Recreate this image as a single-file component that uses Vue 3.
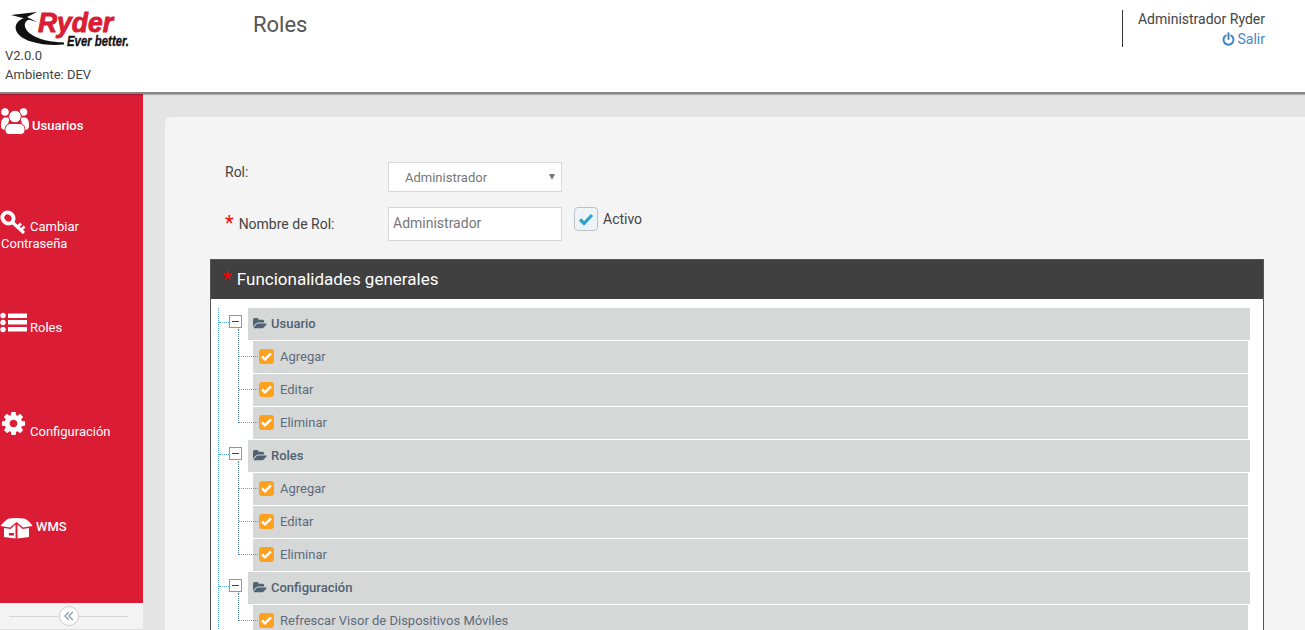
<script setup>
const groups = [
  { name: 'Usuario', items: ['Agregar', 'Editar', 'Eliminar'] },
  { name: 'Roles', items: ['Agregar', 'Editar', 'Eliminar'] },
  { name: 'Configuración', items: ['Refrescar Visor de Dispositivos Móviles'] },
]
</script>

<template>
  <div class="page">
    <header class="top">
      <div class="brand">
        <svg class="logo" width="135" height="52" viewBox="0 0 135 52">
          <path d="M11 15 L37 12 L27 17 L37 22 L25 18.500 L21 17.500 Z" fill="#111" />
          <path d="M24 18 C11 23 13 36 31 41.500 C42 45 54 45.500 64 44.500 L64 42.500 C48 42 31 38 26 29 C23.500 24.500 25 21 30 19 Z" fill="#111" />
          <text class="logo-ryder" x="38" y="32" textLength="75" lengthAdjust="spacingAndGlyphs">Ryder</text>
          <text class="logo-tag" x="67" y="46" textLength="62" lengthAdjust="spacingAndGlyphs">Ever better.</text>
        </svg>
        <div class="version">V2.0.0</div>
        <div class="env">Ambiente: DEV</div>
      </div>
      <h1 class="title">Roles</h1>
      <div class="user">
        <div class="user-name">Administrador Ryder</div>
        <div class="logout">
          <svg width="13" height="14" viewBox="0 0 13 14" fill="none" stroke="#3d85c6" stroke-width="2" stroke-linecap="round">
            <path d="M3.800 3.500 A5 5 0 1 0 9.200 3.500" />
            <path d="M6.500 1.200 V7" />
          </svg>
          <span>Salir</span>
        </div>
      </div>
    </header>

    <div class="body">
      <aside class="side">
        <nav class="menu">
          <a class="item item-users">
            <svg class="ico" width="30" height="28" viewBox="0 0 30 28" fill="#fff">
              <circle cx="5" cy="5" r="3.800" /><circle cx="23.500" cy="5" r="3.800" />
              <path d="M1 19 C1 12 3 10.500 6 10.500 L10 10.500 L6 23 Q1 23 1 19 Z" />
              <path d="M29 19 C29 12 27 10.500 24 10.500 L20 10.500 L24 23 Q29 23 29 19 Z" />
              <circle cx="15" cy="9.500" r="6.300" stroke="#da1c35" stroke-width="1" />
              <path d="M5 23.500 C5 18 8 16.500 11 16.500 L19 16.500 C22 16.500 25 18 25 23.500 Q25 27.500 21 27.500 L9 27.500 Q5 27.500 5 23.500 Z" stroke="#da1c35" stroke-width="1" />
            </svg><span class="label">Usuarios</span>
          </a>
          <a class="item item-key">
            <svg class="ico key" width="26" height="24" viewBox="0 0 26 24" fill="none" stroke="#fff">
              <ellipse cx="8" cy="8" rx="5.800" ry="5.200" transform="rotate(40 8 8)" stroke-width="4" />
              <path d="M12 12 L24 23" stroke-width="3.200" />
              <path d="M17.500 17 L21 13.500 M21 20 L24.500 16.500" stroke-width="2.600" />
            </svg><span class="label">Cambiar Contraseña</span>
          </a>
          <a class="item item-roles">
            <svg class="ico" width="27" height="21" viewBox="0 0 27 21" fill="#fff">
              <circle cx="3" cy="3.500" r="2.700" /><circle cx="3" cy="10.500" r="2.700" /><circle cx="3" cy="17.500" r="2.700" />
              <rect x="8" y="1.500" width="19" height="4.500" /><rect x="8" y="8" width="19" height="4.500" /><rect x="8" y="15" width="19" height="4.500" />
            </svg><span class="label">Roles</span>
          </a>
          <a class="item item-config">
            <svg class="ico" width="27" height="27" viewBox="0 0 1792 1792" fill="#fff">
              <path d="M1152 896q0-106-75-181t-181-75-181 75-75 181 75 181 181 75 181-75 75-181zm512-109v222q0 12-8 23t-20 13l-185 28q-19 54-39 91 35 50 107 138 10 12 10 25t-9 23q-27 37-99 108t-94 71q-12 0-26-9l-138-108q-44 23-91 38-16 136-29 186-7 28-36 28h-222q-14 0-24.500-8.500t-11.500-21.500l-28-184q-49-16-90-37l-141 107q-10 9-25 9-14 0-25-11-126-114-165-168-7-10-7-23 0-12 8-23 15-21 51-66.500t54-70.500q-27-50-41-99l-183-27q-13-2-21-12.500t-8-23.500v-222q0-12 8-23t19-13l186-28q14-46 39-92-40-57-107-138-10-12-10-24 0-10 9-23 26-36 98.500-107.500t94.500-71.500q13 0 26 10l138 107q44-23 91-38 16-136 29-186 7-28 36-28h222q14 0 24.500 8.500t11.500 21.500l28 184q49 16 90 37l142-107q9-9 24-9 13 0 25 10 129 119 165 170 7 8 7 22 0 12-8 23-15 21-51 66.500t-54 70.500q26 50 41 98l183 28q13 2 21 12.500t8 23.500z" />
            </svg><span class="label">Configuración</span>
          </a>
          <a class="item item-wms">
            <svg class="ico" width="33" height="22" viewBox="0 0 33 22" fill="#fff">
              <path d="M0.500 9 Q5 3 9 1.500 Q16 0.500 24 1.500 Q29 3 32.500 9 L23 10.500 L16.500 5 L10 10.500 Z" />
              <path d="M4 11 L10.500 12 L15.500 7.500 L15.500 21.500 L4 20 Z" />
              <path d="M17.500 7.500 L22.500 12 L29 11 L29 20 L17.500 21.500 Z" />
              <rect x="9" y="16" width="5" height="2.500" fill="#da1c35" />
            </svg><span class="label">WMS</span>
          </a>
        </nav>
        <div class="collapse">
          <span class="rule"></span>
          <span class="toggle">
            <svg width="10" height="10" viewBox="0 0 10 10" fill="none" stroke="#8a9bb0" stroke-width="1.300">
              <path d="M4.800 1 L1 5 L4.800 9 M8.800 1 L5 5 L8.800 9" />
            </svg>
          </span>
          <span class="rule"></span>
        </div>
      </aside>

      <main class="main">
        <section class="panel">
          <div class="row row-rol">
            <label class="lbl">Rol:</label>
            <div class="select">
              <span>Administrador</span>
              <i class="caret"></i>
            </div>
          </div>
          <div class="row row-name">
            <label class="lbl lbl-name"><b class="req">*</b><span class="name-text">Nombre de Rol:</span></label>
            <div class="input">Administrador</div>
            <span class="active-box">
              <svg width="16" height="13" viewBox="0 0 16 13" fill="none" stroke="#2ea2cc" stroke-width="3.200">
                <path d="M2 6.500 L6 10.500 L14 2" />
              </svg>
            </span>
            <span class="active-label">Activo</span>
          </div>

          <div class="box">
            <div class="box-head"><b class="req">*</b> Funcionalidades generales</div>
            <div class="tree">
              <div v-for="g in groups" :key="g.name" class="group">
                <span class="expander"></span>
                <div class="parent">
                  <svg width="14" height="13" viewBox="0 0 1920 1792" fill="#4f6172">
                    <path d="M1879 952q0 31-31 66l-336 396q-43 51-120.500 86.500t-143.500 35.500h-1088q-34 0-60.500-13t-26.500-43q0-31 31-66l336-396q43-51 120.500-86.500t143.500-35.500h1088q34 0 60.500 13t26.500 43zm-343-344v160h-832q-94 0-197 47.500t-164 119.500l-337 396-5 6q0-4-.5-12.500t-.5-12.500v-960q0-92 66-158t158-66h320q92 0 158 66t66 158v32h544q92 0 158 66t66 158z" />
                  </svg>
                  <span>{{ g.name }}</span>
                </div>
                <div class="children">
                  <div v-for="it in g.items" :key="it" class="child">
                    <span class="check">
                      <svg width="11" height="9" viewBox="0 0 11 9" fill="none" stroke="#fff" stroke-width="2.400">
                        <path d="M1 4.500 L4 7.300 L10 1.300" />
                      </svg>
                    </span>
                    <span>{{ it }}</span>
                  </div>
                </div>
              </div>
            </div>
          </div>
        </section>
      </main>
    </div>
  </div>
</template>

<style>
html, body { margin: 0; overflow: hidden; }
</style>

<style scoped>
.page {
  width: 1305px;
  height: 630px;
  overflow: hidden;
  display: flex;
  flex-direction: column;
  font-family: Roboto, "Liberation Sans", sans-serif;
  font-size: 14px;
  color: #555;
  background: #e4e4e4;
}
.top {
  height: 92px;
  flex: none;
  box-sizing: content-box;
  display: flex;
  background: #fff;
  border-bottom: 2px solid #868686;
  box-shadow: 0 1px 1px rgba(0, 0, 0, .22);
  position: relative;
  z-index: 1;
}
.brand { width: 253px; flex: none; font-size: 13px; color: #444; }
.logo { display: block; margin-bottom: -4px; }
.logo-ryder { font: italic 700 27px "Liberation Sans", sans-serif; fill: #da1c35; stroke: #da1c35; stroke-width: .9px; }
.logo-tag { font: italic 700 14px "Liberation Sans", sans-serif; fill: #111; stroke: #111; stroke-width: .3px; }
.version { padding-left: 5px; height: 18px; line-height: 16px; }
.env { padding-left: 5px; line-height: 18px; }
.title { margin: 12px 0 0; font-size: 22px; font-weight: 400; line-height: 26px; color: #555; flex: 1; }
.user {
  width: 142px;
  height: 37px;
  margin: 10px 40px 0 0;
  border-left: 1px solid #333;
  text-align: right;
  color: #444;
}
.user-name { line-height: 18px; }
.logout { margin-top: 2px; line-height: 18px; color: #4a86c5; display: flex; justify-content: flex-end; align-items: center; gap: 3px; }

.body { flex: 1; min-height: 0; display: flex; }
.side { width: 143px; flex: none; display: flex; flex-direction: column; background: #da1c35; }
.menu { flex: 1; padding-top: 13px; color: #fff; font-size: 13px; font-weight: 500; }
.item { display: block; line-height: 17px; }
.ico { vertical-align: bottom; }
.label { margin-left: 2px; }
.item-users { height: 103px; }
.item-users .label { position: relative; top: -1px; }
.item-key { height: 102px; font-weight: 400; padding-left: 1px; box-sizing: border-box; }
.item-key .key { margin-left: -1px; margin-right: 2px; margin-bottom: 1px; }
.item-roles { height: 98px; font-weight: 400; }
.item-roles .ico { margin-right: 1px; }
.item-roles .label { position: relative; top: 3px; }
.item-config { height: 107px; font-weight: 400; }
.item-config .label { margin-left: 3px; position: relative; top: 3px; }
.item-wms .label { margin-left: 3px; position: relative; top: -4px; }
.collapse {
  height: 27px;
  flex: none;
  box-sizing: border-box;
  background: #f3f3f3;
  border-bottom: 1px solid #ddd;
  display: flex;
  align-items: center;
  padding: 0 15px 0 9px;
}
.rule { flex: 1; height: 1px; background: #d4d4d4; }
.toggle {
  width: 18px;
  height: 18px;
  border: 1px solid #ccc;
  border-radius: 50%;
  background: #fff;
  display: flex;
  align-items: center;
  justify-content: center;
  flex: none;
}

.main { flex: 1; min-width: 0; padding: 23px 0 0 22px; }
.panel {
  height: 100%;
  box-sizing: border-box;
  background: #f4f4f4;
  border-top-left-radius: 6px;
  padding: 45px 41px 0 45px;
  overflow: hidden;
}
.row { display: flex; }
.lbl { width: 178px; padding-left: 15px; box-sizing: border-box; flex: none; color: #444; }
.row-rol { height: 30px; }
.row-rol .lbl { line-height: 20px; }
.select {
  width: 174px;
  height: 30px;
  box-sizing: border-box;
  border: 1px solid #d8d8d8;
  background: #fff;
  padding-left: 16px;
  line-height: 30px;
  font-size: 13px;
  color: #777;
  position: relative;
}
.caret {
  position: absolute;
  right: 6px;
  top: 11px;
  border-left: 3px solid transparent;
  border-right: 3px solid transparent;
  border-top: 6px solid #777;
}
.row-name { height: 34px; margin-top: 15px; }
.lbl-name { line-height: 34px; }
.name-text { margin-left: 5px; }
.req { color: #f00; font-weight: 400; font-size: 20px; line-height: 1; position: relative; top: 1px; }
.input {
  width: 174px;
  height: 34px;
  box-sizing: border-box;
  border: 1px solid #d8d8d8;
  background: #fff;
  padding-left: 4px;
  line-height: 31px;
  color: #777;
}
.active-box {
  width: 24px;
  height: 24px;
  margin-left: 12px;
  box-sizing: border-box;
  border: 1px solid #b9c3cc;
  border-radius: 4px;
  background: #eef3f8;
  display: flex;
  align-items: center;
  justify-content: center;
}
.active-label { margin-left: 5px; line-height: 24px; color: #444; }

.box {
  margin-top: 18px;
  border: 1px solid #555;
  background: #fff;
  height: 400px;
}
.box-head {
  height: 39px;
  box-sizing: border-box;
  background: #404040;
  color: #fff;
  font-size: 17px;
  font-weight: 400;
  line-height: 38px;
  padding-left: 12px;
}
.box-head .req { margin-right: 1px; }
.tree {
  padding-top: 9px;
  position: relative;
}
.tree::before {
  content: "";
  position: absolute;
  left: 7px;
  top: 9px;
  bottom: 0;
  border-left: 1px dotted #4ea6d8;
}
.group { position: relative; margin-bottom: 1px; }
.expander {
  position: absolute;
  left: 18px;
  top: 7px;
  width: 13px;
  height: 13px;
  box-sizing: border-box;
  border: 1px solid #7d9bb0;
  background: #fff;
}
.expander::before {
  content: "";
  position: absolute;
  left: 2px;
  top: 5px;
  width: 7px;
  height: 1px;
  background: #444;
}
.expander::after {
  content: "";
  position: absolute;
  left: -11px;
  top: 6px;
  width: 10px;
  border-top: 1px dotted #4ea6d8;
}
.parent {
  height: 32px;
  margin: 0 13px 1px 37px;
  padding: 0 0 2px 5px;
  background: #d6d8d7;
  display: flex;
  align-items: center;
  gap: 4px;
  font-size: 13px;
  font-weight: 500;
  color: #4f6172;
  box-sizing: border-box;
}
.children { position: relative; margin-left: 42px; margin-right: 15px; }
.children::before {
  content: "";
  position: absolute;
  left: -15px;
  top: -12px;
  bottom: 16px;
  border-left: 1px dotted #4e7f9f;
}
.child {
  height: 32px;
  margin-bottom: 1px;
  padding: 0 0 2px 6px;
  box-sizing: border-box;
  background: #d6d8d7;
  display: flex;
  align-items: center;
  gap: 6px;
  font-size: 13px;
  color: #5d6b7c;
  position: relative;
}
.child:last-child { margin-bottom: 0; }
.child::before {
  content: "";
  position: absolute;
  left: -14px;
  top: 15px;
  width: 19px;
  border-top: 1px dotted #4ea6d8;
}
.check {
  width: 15px;
  height: 15px;
  border-radius: 3px;
  background: #ffa11f;
  display: flex;
  align-items: center;
  justify-content: center;
  flex: none;
}
</style>
